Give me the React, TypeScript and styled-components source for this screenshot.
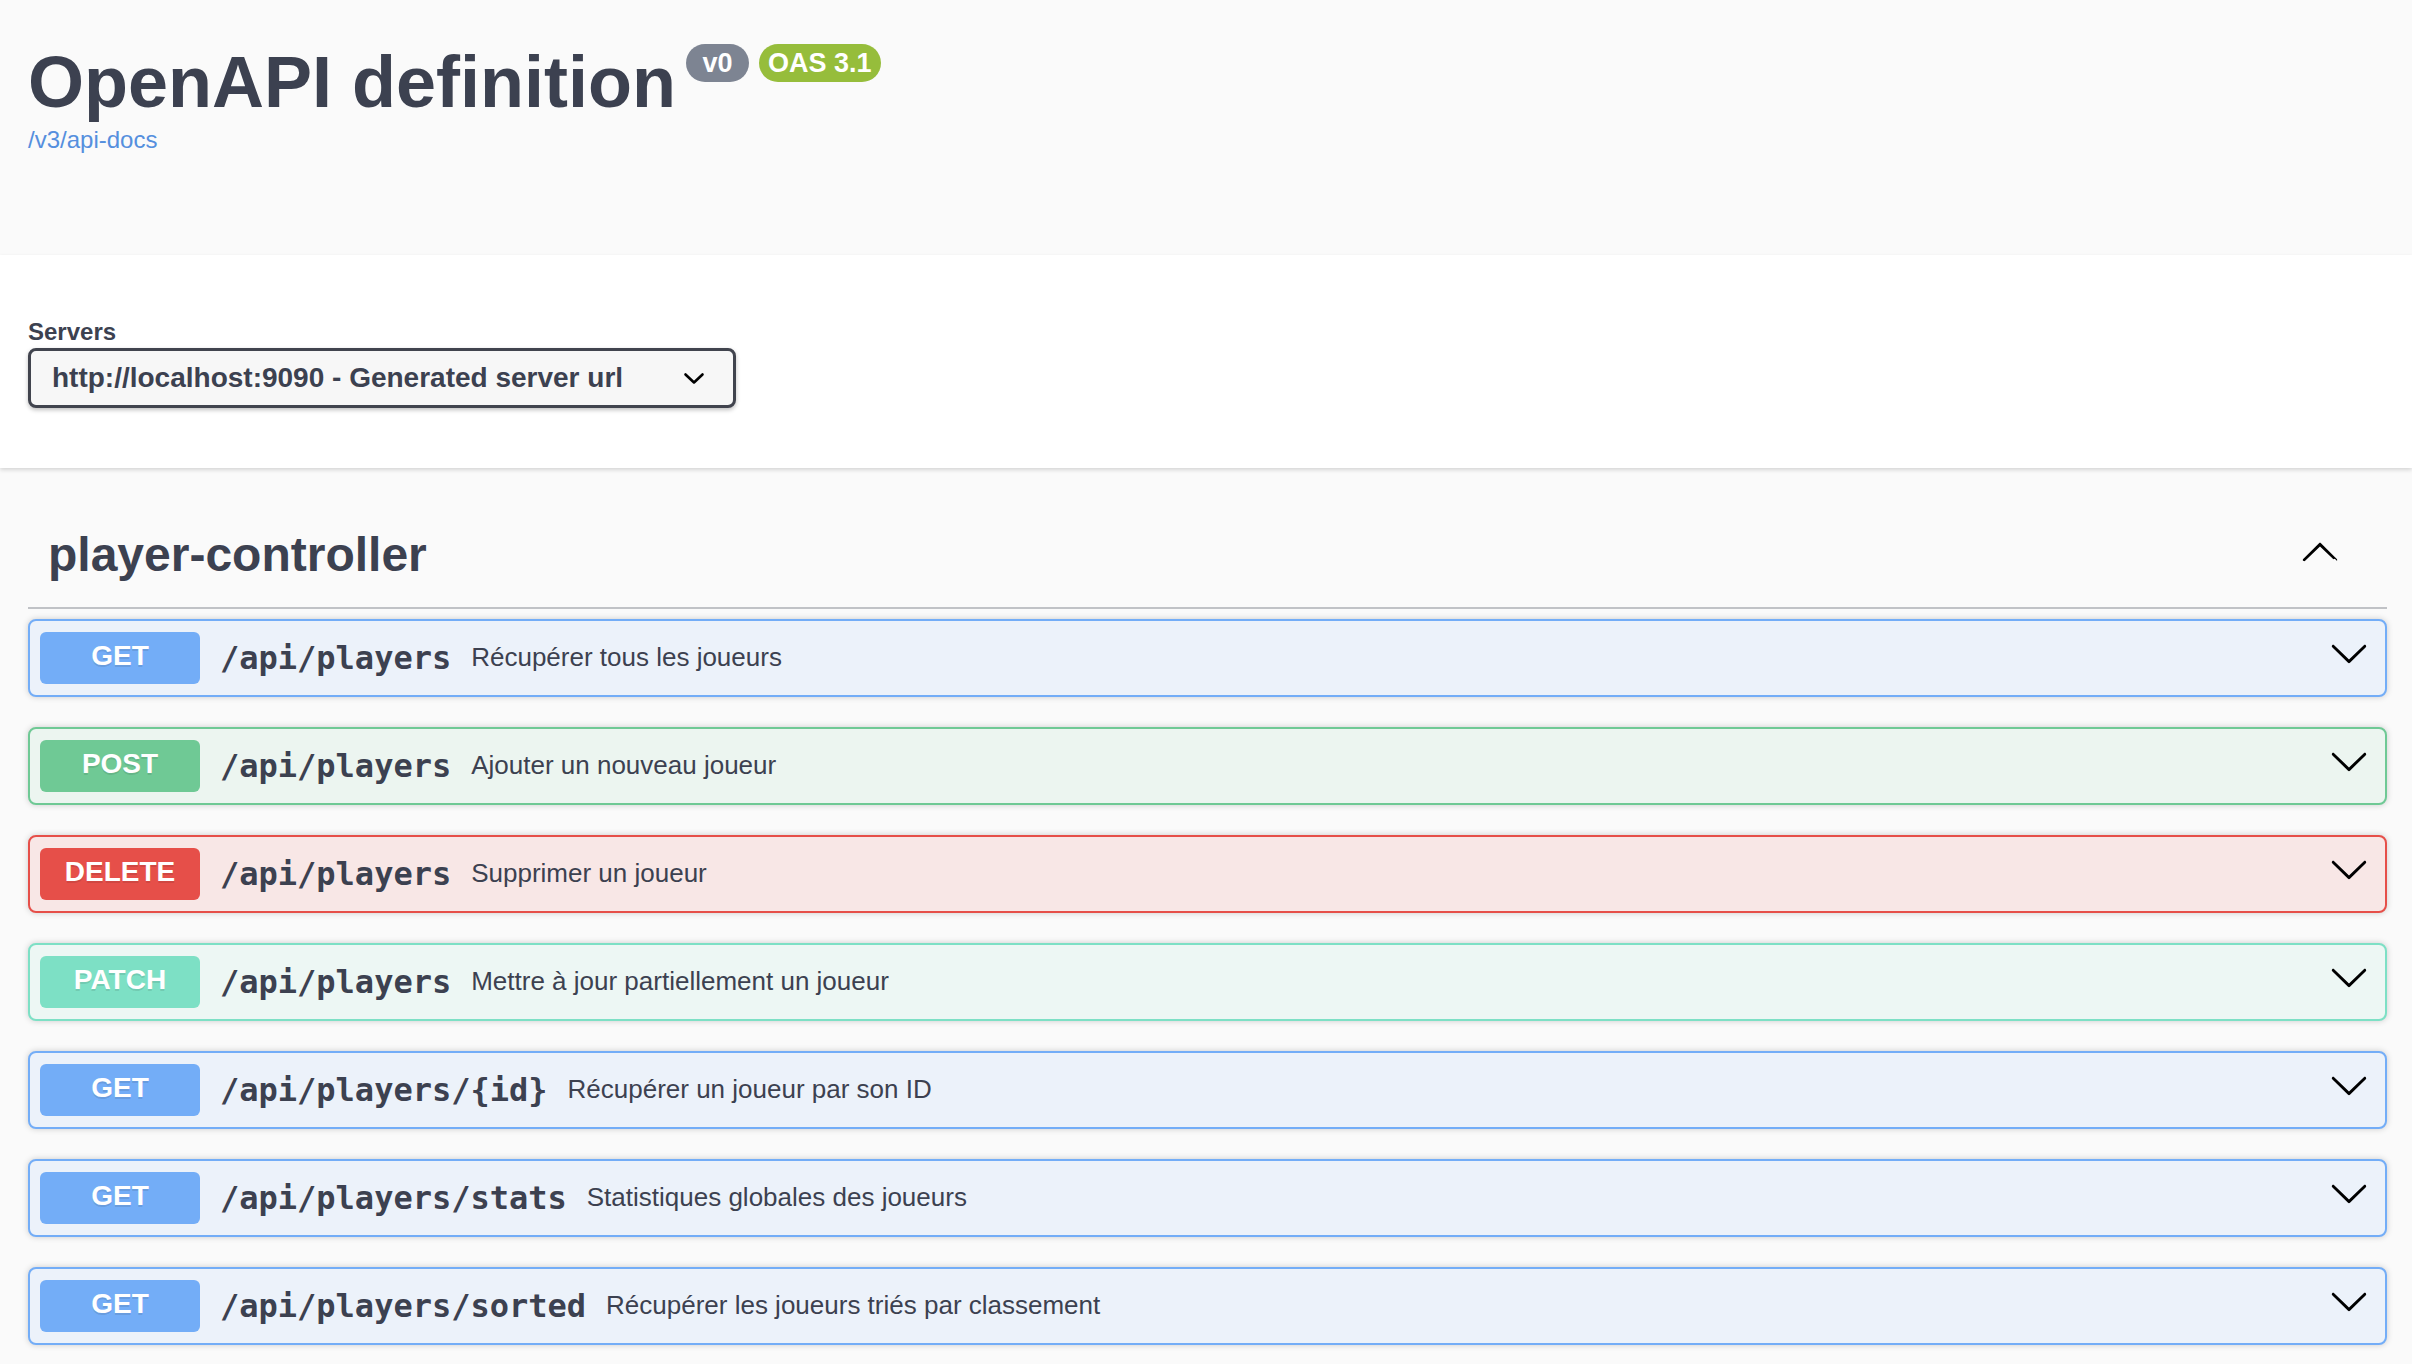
import React from "react";
import styled, { createGlobalStyle } from "styled-components";

const GlobalStyle = createGlobalStyle`
  html, body { margin: 0; padding: 0; background: #fafafa; }
  body {
    font-family: "Liberation Sans", Arial, Helvetica, sans-serif;
    color: #3c4150;
  }
  * { box-sizing: border-box; }
`;

type MethodKind = "GET" | "POST" | "DELETE" | "PATCH";

const palette: Record<MethodKind, { main: string; bg: string }> = {
  GET: { main: "#73adf7", bg: "#ecf2fa" },
  POST: { main: "#6fc995", bg: "#ecf5f0" },
  DELETE: { main: "#e64f49", bg: "#f8e7e6" },
  PATCH: { main: "#7de0c5", bg: "#edf7f4" },
};

const Info = styled.header`
  height: 255px;
  padding: 40px 25px 0 28px;
`;

const TitleRow = styled.div`
  display: flex;
  align-items: flex-start;
`;

const Title = styled.h2`
  margin: 0 10px 0 0;
  font-size: 72px;
  line-height: 84px;
  font-weight: 700;
  color: #3c4150;
`;

const Badges = styled.div`
  display: flex;
  gap: 10px;
  margin-top: 4px;
`;

const Badge = styled.span<{ $bg: string }>`
  display: inline-block;
  height: 38px;
  min-width: 63px;
  padding: 0 9px;
  border-radius: 38px;
  background: ${(p) => p.$bg};
  color: #fff;
  font-size: 27px;
  font-weight: 700;
  line-height: 38px;
  text-align: center;
`;

const ApiLink = styled.a`
  display: inline-block;
  margin-top: 2px;
  font-size: 24px;
  line-height: 28px;
  color: #558fde;
  text-decoration: none;
`;

const SchemeContainer = styled.section`
  background: #fff;
  box-shadow: 0 2px 4px 0 rgba(0, 0, 0, 0.15);
  padding: 63px 25px 60px 28px;
`;

const ServersLabel = styled.div`
  font-size: 24px;
  line-height: 28px;
  font-weight: 700;
  color: #3c4150;
  margin-bottom: 2px;
`;

const ServerSelect = styled.div`
  width: 708px;
  height: 60px;
  display: flex;
  align-items: center;
  justify-content: space-between;
  padding: 0 28px 0 21px;
  border: 3px solid #41444e;
  border-radius: 8px;
  background: #f7f7f7;
  box-shadow: 0 2px 4px 0 rgba(0, 0, 0, 0.25);
  font-size: 28px;
  font-weight: 700;
  color: #3c4150;
  white-space: nowrap;
`;

const Wrapper = styled.main`
  padding: 40px 25px 40px 28px;
`;

const TagHeading = styled.h3`
  display: flex;
  align-items: center;
  margin: 0;
  padding: 16px 40px 21px 20px;
  border-bottom: 2px solid rgba(59, 65, 81, 0.3);
  font-size: 48px;
  line-height: 62px;
  font-weight: 700;
  color: #3c4150;
`;

const TagName = styled.span`
  flex: 1;
`;

const ToggleButton = styled.button`
  display: flex;
  width: 40px;
  height: 40px;
  padding: 0;
  margin: 0 7px 12px 0;
  border: none;
  background: none;
  color: #000;
`;

const OpList = styled.div`
  display: flex;
  flex-direction: column;
  gap: 30px;
  padding-top: 10px;
`;

const OpBlock = styled.div<{ $kind: MethodKind }>`
  display: flex;
  align-items: center;
  height: 78px;
  padding: 11px 10px;
  border: 2px solid ${(p) => palette[p.$kind].main};
  border-radius: 8px;
  background: ${(p) => palette[p.$kind].bg};
  box-shadow: 0 0 6px rgba(0, 0, 0, 0.19);
`;

const Method = styled.span<{ $kind: MethodKind }>`
  display: flex;
  align-items: center;
  justify-content: center;
  flex: 0 0 160px;
  height: 52px;
  padding-bottom: 4px;
  border-radius: 6px;
  background: ${(p) => palette[p.$kind].main};
  color: #fff;
  font-size: 28px;
  font-weight: 700;
  text-shadow: 0 2px 0 rgba(0, 0, 0, 0.1);
`;

const Path = styled.span`
  padding: 0 20px;
  font-family: "DejaVu Sans Mono", "Liberation Mono", monospace;
  font-size: 32px;
  font-weight: 700;
  line-height: 38px;
  color: #3c4150;
  white-space: nowrap;
`;

const Description = styled.span`
  flex: 1;
  padding-bottom: 2px;
  font-size: 26px;
  color: #3c4150;
`;

const ArrowIcon = styled.svg`
  flex: 0 0 40px;
  width: 40px;
  height: 40px;
  margin: 0 6px 10px 0;
  fill: #000;
`;

const SmallChevron = () => (
  <svg width="22" height="13" viewBox="0 0 22 13" aria-hidden="true">
    <polyline
      points="2.5,2.5 11,10.5 19.5,2.5"
      fill="none"
      stroke="#000"
      strokeWidth="2.6"
      strokeLinecap="round"
      strokeLinejoin="round"
    />
  </svg>
);

const ArrowDown = () => (
  <ArrowIcon viewBox="0 0 20 20" aria-hidden="true">
    <path d="M17.418 6.109c.272-.268.709-.268.979 0s.271.701 0 .969l-7.908 7.83c-.27.268-.707.268-.979 0l-7.908-7.83c-.27-.268-.27-.701 0-.969.271-.268.709-.268.979 0L10 13.25l7.418-7.141z" />
  </ArrowIcon>
);

const ArrowUp = () => (
  <svg width="40" height="40" viewBox="0 0 20 20" aria-hidden="true" fill="#000">
    <path d="M17.418 14.908c-.272.268-.709.268-.979 0L10 8.75l-7.418 7.158c-.27.268-.707.268-.979 0-.27-.268-.27-.701 0-.969l7.908-7.83c.27-.268.707-.268.979 0l7.908 7.83c.27.268.27.702 0 .969z" />
  </svg>
);

const operations: { method: MethodKind; path: string; summary: string }[] = [
  { method: "GET", path: "/api/players", summary: "Récupérer tous les joueurs" },
  { method: "POST", path: "/api/players", summary: "Ajouter un nouveau joueur" },
  { method: "DELETE", path: "/api/players", summary: "Supprimer un joueur" },
  { method: "PATCH", path: "/api/players", summary: "Mettre à jour partiellement un joueur" },
  { method: "GET", path: "/api/players/{id}", summary: "Récupérer un joueur par son ID" },
  { method: "GET", path: "/api/players/stats", summary: "Statistiques globales des joueurs" },
  { method: "GET", path: "/api/players/sorted", summary: "Récupérer les joueurs triés par classement" },
];

export default function App() {
  return (
    <>
      <GlobalStyle />
      <Info>
        <TitleRow>
          <Title>OpenAPI definition</Title>
          <Badges>
            <Badge $bg="#7d8492">v0</Badge>
            <Badge $bg="#96bd3b">OAS 3.1</Badge>
          </Badges>
        </TitleRow>
        <ApiLink href="#">/v3/api-docs</ApiLink>
      </Info>
      <SchemeContainer>
        <ServersLabel>Servers</ServersLabel>
        <ServerSelect>
          <span>http://localhost:9090 - Generated server url</span>
          <SmallChevron />
        </ServerSelect>
      </SchemeContainer>
      <Wrapper>
        <TagHeading>
          <TagName>player-controller</TagName>
          <ToggleButton aria-label="collapse">
            <ArrowUp />
          </ToggleButton>
        </TagHeading>
        <OpList>
          {operations.map((op, i) => (
            <OpBlock key={i} $kind={op.method}>
              <Method $kind={op.method}>{op.method}</Method>
              <Path>{op.path}</Path>
              <Description>{op.summary}</Description>
              <ArrowDown />
            </OpBlock>
          ))}
        </OpList>
      </Wrapper>
    </>
  );
}
